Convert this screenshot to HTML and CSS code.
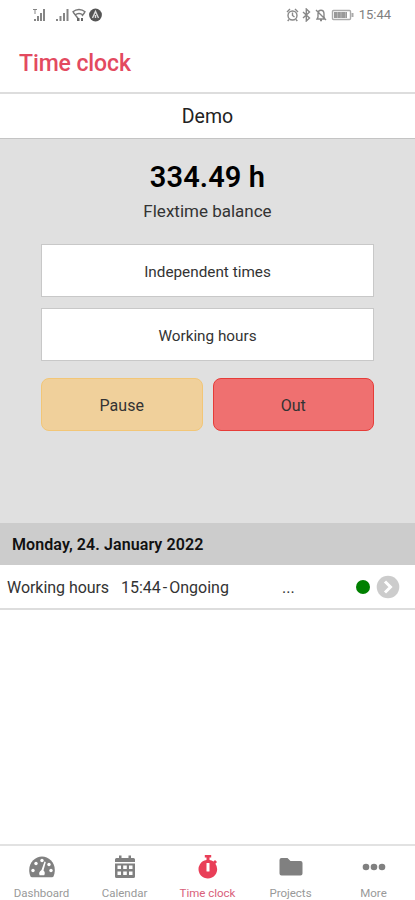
FILE: index.html
```html
<!DOCTYPE html>
<html lang="en">
<head>
<meta charset="utf-8">
<title>Time clock</title>
<link rel="stylesheet" href="styles.css">
</head>
<body>
<div class="app">
  <div class="status">
    <svg class="status-left" width="74" height="16" viewBox="0 0 74 16">
      <g fill="#858585">
        <path d="M2 12h2v2H2zM5 9h2v5H5zM8 6h2v8H8zM11 2h2v12h-2z"/>
        <path d="M1 2h4v1H3.500v4h-1V3H1z"/>
        <path d="M24 12h2v2h-2zM27.500 9h2v5h-2zM31 6h2v8h-2zM34.500 2h2v12h-2z"/>
      </g>
      <g fill="none" stroke="#777" stroke-width="1.400">
        <path d="M40.500 5q6.500-5 13 0M43 8q4-3 8 0M41 5l5.500 7M53 5l-3 4"/>
      </g>
      <path fill="#666" d="M45 11h2.500v3H45zM49 11h2v3h-2z"/>
      <circle cx="63.500" cy="8" r="6.400" fill="#555"/>
      <path d="M60.500 11l3-6.500 3 6.500M63.500 8v3" fill="none" stroke="#ddd" stroke-width="1.400"/>
    </svg>
    <div class="status-right">
      <svg width="69" height="14" viewBox="0 0 69 14" fill="none" stroke="#888" stroke-width="1.400">
        <circle cx="6.500" cy="7.500" r="4.500"/><path d="M6.500 4.500v3l2 1.500M1 4l3-3M12 4L9 1M3 11.500L1.700 13M10 11.500l1.300 1.500"/>
        <path d="M17 4l6.500 6-3.200 3V1l3.200 3-6.500 6"/>
        <path d="M31 11h8l-1-2V6c0-5-6-5-6 0v3zM34 12.500h2M30 2l10 10"/>
        <rect x="46.500" y="2.500" width="18" height="9" rx="1" stroke="#aaa"/><path d="M66.500 5v4" stroke="#aaa" stroke-width="2"/>
        <path d="M48 4h13v6H48z" fill="#999" stroke="none"/><path d="M51.500 4v6M55 4v6M59.500 4v6" stroke="#bbb" stroke-width=".8"/>
      </svg>
      <span>15:44</span>
    </div>
  </div>
  <header class="header"><h1 class="t-title">Time clock</h1></header>
  <div class="account"><span class="t-demo">Demo</span></div>
  <main class="panel">
    <div class="balance"><span class="t-balance">334.49 h</span></div>
    <div class="caption"><span class="t-caption">Flextime balance</span></div>
    <div class="field"><span class="t-ind">Independent times</span></div>
    <div class="field"><span class="t-work">Working hours</span></div>
    <div class="actions">
      <button class="btn pause">Pause</button>
      <button class="btn out">Out</button>
    </div>
  </main>
  <h2 class="date"><span class="t-date">Monday, 24. January 2022</span></h2>
  <div class="entry">
    <span class="kind">Working hours</span>
    <span class="time">15:44<i>-</i>Ongoing</span>
    <span class="note">...</span>
    <span class="dot"></span>
    <svg width="24" height="24" viewBox="0 0 24 24"><circle cx="12" cy="12" r="11.300" fill="#ccc"/><path d="M9 6.500l5.500 5.500L9 17.500" fill="none" stroke="#fff" stroke-width="3"/></svg>
  </div>
  <nav class="tabs">
    <div class="tab">
      <svg width="28" height="26" viewBox="0 0 28 26"><path d="M2.500 22.500C-2 11 6 2.500 14 2.500S30 11 25.500 22.500q-.5.800-1.500.800H4q-1 0-1.500-.800z" fill="#808080"/><g fill="#fff"><circle cx="5" cy="16.500" r="1.700"/><circle cx="8" cy="9.500" r="1.700"/><circle cx="14" cy="6.500" r="1.700"/><circle cx="21" cy="10.500" r="1.700"/><circle cx="23" cy="16.500" r="1.700"/><path d="M16.500 7.500l1.300.4-2.300 8.600q2.200 2 .7 4.800h-4.600q-1.500-3 1.900-5.200z"/></g></svg>
      <span>Dashboard</span>
    </div>
    <div class="tab">
      <svg width="28" height="26" viewBox="0 0 28 26"><path d="M4 8V5.500Q4 4 5.500 4H8V1.500h2.500V4h7V1.500H20V4h2.500Q24 4 24 5.500V8zM4 9.500h20v13q0 1.500-1.500 1.500h-17Q4 24 4 22.500z" fill="#808080"/><path d="M6.500 11.500h3.500V15H6.500zM12.200 11.500h3.600V15h-3.600zM18 11.500h3.500V15H18zM6.500 17.500h3.500V21H6.500zM12.200 17.500h3.600V21h-3.600zM18 17.500h3.500V21H18z" fill="#fff"/></svg>
      <span>Calendar</span>
    </div>
    <div class="tab active">
      <svg width="28" height="26" viewBox="0 0 28 26"><path d="M10.800 1h6.400v2.500h-1.700V6q2.200.3 4 1.600L21 6l2 2-1.600 1.800A9.300 9.300 0 1 1 12.500 6V3.500h-1.700z" fill="#e93f58"/><rect x="12.500" y="9" width="3" height="8.500" rx=".5" fill="#fff"/></svg>
      <span>Time clock</span>
    </div>
    <div class="tab">
      <svg width="28" height="26" viewBox="0 0 28 26"><path d="M2.500 6q0-2 2-2h6l3 3h10q2 0 2 2v10.500q0 2-2 2h-19q-2 0-2-2z" fill="#808080"/></svg>
      <span>Projects</span>
    </div>
    <div class="tab">
      <svg width="28" height="26" viewBox="0 0 28 26" fill="#808080"><circle cx="6" cy="13" r="3.300"/><circle cx="14" cy="13" r="3.300"/><circle cx="22" cy="13" r="3.300"/></svg>
      <span>More</span>
    </div>
  </nav>
</div>
</body>
</html>
```
FILE: styles.css
```css
* { box-sizing: border-box; }
body { margin: 0; font-family: Roboto, "Liberation Sans", sans-serif; color: #333; background: #fff; }
h1, h2 { margin: 0; }
span { white-space: nowrap; }
svg { display: block; flex: none; }
.app { width: 415px; height: 900px; display: flex; flex-direction: column; overflow: hidden; }
.status { height: 30px; display: flex; justify-content: space-between; padding: 7px 24px 0 32px; }
.status-right { display: flex; gap: 4px; height: 16px; align-items: center; font-size: 13px; line-height: 16px; color: #808080; }
.header { height: 64px; padding: 5px 19px 0; border-bottom: 2px solid #ddd; display: flex; align-items: center; }
.t-title { font-size: 23px; font-weight: 500; line-height: 28px; color: #e34a5f; letter-spacing: -.1px; }
.account { height: 45px; padding-top: 1px; border-bottom: 1px solid #c4c4c4; display: flex; align-items: center; justify-content: center; font-size: 19.500px; color: #222; }
.panel { height: 384px; background: #e0e0e0; padding: 20px 41px 0; }
.balance { height: 36px; line-height: 36px; text-align: center; font-size: 29px; font-weight: 600; color: #000; letter-spacing: .1px; }
.caption { height: 30px; line-height: 32px; text-align: center; font-size: 17px; }
.field { height: 53px; padding-top: 2px; margin-top: 11px; background: #fff; border: 1px solid #c8c8c8; display: flex; align-items: center; justify-content: center; font-size: 15.300px; }
.caption + .field { margin-top: 19px; }
.actions { display: flex; gap: 10px; margin-top: 17px; }
.btn { flex: 1; height: 53px; padding: 2px 0 0; border-radius: 8px; font: 400 16px Roboto, sans-serif; color: #333; }
.pause { background: #f0d09b; border: 1px solid #f2c677; }
.out { background: #ef7070; border: 1px solid #e63c38; }
.date { height: 42px; line-height: 43px; background: #ccc; padding-left: 12px; font-size: 16px; font-weight: 600; color: #111; letter-spacing: .09px; }
.entry { height: 45px; border-bottom: 2px solid #ddd; display: flex; align-items: center; padding: 0 15px 0 7px; font-size: 16px; }
.kind, .time, .note { padding-top: 2px; }
.kind { width: 114px; letter-spacing: -.05px; }
.time { width: 161px; }
.time i { font-style: normal; margin: 0 2px; }
.note { flex: 1; }
.dot { width: 14px; height: 14px; border-radius: 50%; background: #008000; margin-right: 6px; }
.tabs { margin-top: auto; height: 56px; border-top: 2px solid #e2e2e2; display: flex; }
.tab { flex: 1; display: flex; flex-direction: column; align-items: center; padding-top: 8px; font-size: 11.500px; line-height: 14px; color: #999; gap: 6px; }
.active { color: #d9607a; }
```
